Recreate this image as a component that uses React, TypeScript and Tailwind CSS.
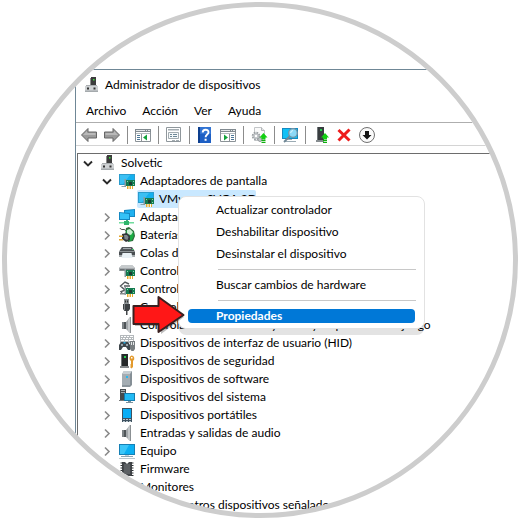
import type { ReactNode } from "react";
import clsx from "clsx";

const MENUS = ["Archivo", "Acción", "Ver", "Ayuda"];

function Svg({ children, className }: { children: ReactNode; className?: string }) {
  return (
    <svg viewBox="0 0 16 16" className={clsx("w-4 h-4 shrink-0", className)} aria-hidden="true">
      {children}
    </svg>
  );
}

/* ---------- shared icon parts ---------- */

function Card() {
  return (
    <>
      <path d="M5.500 6h1.500v8H5.500z" fill="#8d9a9f" />
      <path d="M7 7h9v6H7z" fill="#147a4f" />
      <path d="M8 8h1v1H8zM14 8h1v1h-1zM14 11h1v1h-1z" fill="#8fd8b0" />
      <path d="M10 9h3v3h-3z" fill="#1c3d31" />
      <path d="M8 13h6v3H8z" fill="#e9ab2e" />
      <path d="M9.500 13h1v3h-1zM12 13h1v3h-1z" fill="#fff" />
    </>
  );
}

function UpArrow() {
  return (
    <>
      <path d="M12.500 6L16.500 10.500H14.500V12h-4v-1.500H8.500z" fill="#12cf12" />
      <path d="M10.500 12.500h4V14h-4zM10.500 14.700h4V16h-4z" fill="#0fae0f" />
    </>
  );
}

/* ---------- tree icons ---------- */

const ComputerIcon = () => (
  <Svg>
    <path d="M7 0h5v9H7z" fill="#3c3c3c" />
    <path d="M6 1h1v8H6z" fill="#8b8b8b" />
    <path d="M9 2h1.500v1.500H9z" fill="#3de03d" />
    <path d="M2 8h11v1H2z" fill="#a9adb0" />
    <path d="M1 9h13v6H1z" fill="#cfd2d4" />
    <path d="M1 13.500h13V15H1z" fill="#a5aaad" />
    <path d="M3 10.500h2v2H3zM9.500 10.500h2v2h-2z" fill="#333" />
  </Svg>
);

const DisplayIcon = () => (
  <Svg>
    <path d="M0 1h16v11H0z" fill="#2b9ccd" />
    <path d="M1 2h14v9H1z" fill="#14b0ee" />
    <path d="M1 2h10L4 11H1z" fill="#3cc0f3" />
    <path d="M3 13h4v1H2z" fill="#8fa3ad" />
    <Card />
  </Svg>
);

const NetworkIcon = () => (
  <Svg>
    <path d="M5 1l11-1v8H5z" fill="#1488c2" />
    <path d="M6 2l9-1v6H6z" fill="#1fb1f0" />
    <path d="M0 3l11 1v7H0z" fill="#1488c2" />
    <path d="M1 4l9 1v5H1z" fill="#35c2f7" />
    <path d="M7 11h2v2H7z" fill="#47b07a" />
    <path d="M0 13h15v1.500H0z" fill="#6fdc9c" />
    <path d="M5 12h5v4H5z" fill="#2fb56c" />
  </Svg>
);

const BatteryIcon = () => (
  <Svg>
    <path d="M1 1c1 3 5 0 6 3" fill="none" stroke="#444" />
    <path d="M7 1l3-1 5 4 1 5-2 5-5 1-3-6z" fill="#2f6b3c" />
    <path d="M7.500 3l3-1 4 3v5l-2 3.500-3 .5-2-5z" fill="#19ad43" />
    <path d="M8 3l3-1 3 3-2 3-4-1z" fill="#cdeed3" />
    <path d="M3 7l5-1 3 3v4l-4 2-4-3z" fill="#33373a" />
    <path d="M5 8l3 0 1.500 2-1 3-3-1z" fill="#80878b" />
    <path d="M0 8.500h4V10H0zM0 12h4v1.500H0z" fill="#e0a532" />
  </Svg>
);

const PrinterIcon = () => (
  <Svg>
    <path d="M3 2h10l2 3H1z" fill="#54595c" />
    <path d="M4 3h8v1H4z" fill="#a4aaad" />
    <path d="M1 5h14l1 2v5H0V7z" fill="#4a4f52" />
    <path d="M0 6h16v1H0z" fill="#8d9396" />
    <path d="M0 10h16v2H0z" fill="#a4aaad" />
    <path d="M3.500 8h9l1 5h-11z" fill="#e9f1f5" />
    <path d="M13 4h1.500v1H13z" fill="#37d267" />
  </Svg>
);

const StorageIcon = () => (
  <Svg>
    <path d="M3 2h10l3 3v3H0V5z" fill="#a6abae" />
    <path d="M3 2h10l3 3H0z" fill="#c6cacc" />
    <path d="M1 6h14v1.500H1z" fill="#6b7073" />
    <Card />
  </Svg>
);

const IdeIcon = () => (
  <Svg>
    <path d="M10 3L6 1 1.500 5 6 9l3-2M5 5h6M3 12l-1-1.500 3-1" fill="none" stroke="#555b5e" strokeWidth="1.400" />
    <path d="M1 12h6v1.500H1z" fill="#85898c" />
    <Card />
  </Svg>
);

const UsbIcon = () => (
  <Svg>
    <path d="M5 0h5v5H5z" fill="#8e9497" />
    <path d="M6 1.500h1v2H6zM8 1.500h1v2H8z" fill="#333" />
    <path d="M4 5h7v5l-1.500 2h-4L4 10z" fill="#3d4144" />
    <path d="M5 5h1v6H5z" fill="#7b8184" />
    <path d="M7 12h1.500v4H7z" fill="#44484b" />
  </Svg>
);

const SpeakerIcon = () => (
  <Svg>
    <path d="M3 5h2v7H3z" fill="#7e8487" />
    <path d="M5 5h2v7H5z" fill="#4f5558" />
    <path d="M7 5l4-5v16l-4-4z" fill="#a2a7aa" />
    <path d="M9 3l2-3v16l-2-2z" fill="#c4c8ca" />
    <path d="M11 0h1v16h-1z" fill="#8b9093" />
  </Svg>
);

const HidIcon = () => (
  <Svg>
    <path d="M1 0h14v8H1z" fill="#b4b9bc" />
    <path
      d="M2 1h2v1H2zM5 1h2v1H5zM8 1h2v1H8zM11 1h3v1h-3zM2 3h1v1H2zM4 3h2v1H4zM7 3h2v1H7zM10 3h2v1h-2zM13 3h1v1h-1zM2 5h3v1H2zM6 5h3v1H6zM10 5h4v1h-4z"
      fill="#fff"
    />
    <path d="M2 7h7l2 3v5H9l-2-3H4l-2 3H0v-5z" fill="#3f474c" />
    <path d="M2 9h2v2H2zM7 9h2v2H7z" fill="#95a1a8" />
    <path d="M4.500 7h2v1.500h-2z" fill="#25a9dd" />
    <path d="M11 6h5v8l-1.500 2h-2L11 14z" fill="#777d80" />
    <path d="M12 7h1v3h-1zM14 7h1v3h-1z" fill="#e3e6e7" />
  </Svg>
);

const SecurityIcon = () => (
  <Svg>
    <path d="M3 1h6v12H3z" fill="#26292b" />
    <path d="M2 1h1v12H2z" fill="#707679" />
    <path d="M5 3h2v2H5z" fill="#28cf4f" />
    <path d="M1 13h9v2H1z" fill="#85898c" />
    <path d="M12.500 2.500a3 3 0 0 1 1.500 5.500V14l-1.500 1.500-1.500-1.500 1-1-1-1 1-1V8a3 3 0 0 1 .5-5.500z" fill="#e39a2d" />
    <path d="M12 4h1.500v1.500H12z" fill="#fff" />
  </Svg>
);

const SoftwareIcon = () => (
  <Svg>
    <path d="M3 3l2-3h8v14l-2 2H3z" fill="#858f96" />
    <path d="M3 3h8v13H3z" fill="#a4adb3" />
    <path d="M3 3l2-3h8l-2 3z" fill="#c7ced2" />
    <path d="M7 5h2v2H7z" fill="#2ab8ef" />
    <path d="M3 14h8v2H3z" fill="#8b959c" />
  </Svg>
);

const SystemIcon = () => (
  <Svg>
    <path d="M1 0h6v12H1z" fill="#454b4f" />
    <path d="M2 1h4v1H2zM2 3h4v1H2z" fill="#a3abb0" />
    <path d="M0 11h6v1H0z" fill="#777" />
    <path d="M5 4h11v8H5z" fill="#157cae" />
    <path d="M6 5h9v6H6z" fill="#21baf5" />
    <path d="M9 12h3v1H9zM7 13h7v1H7z" fill="#7c929e" />
  </Svg>
);

const PortableIcon = () => (
  <Svg>
    <path d="M3 1h10v14H3z" fill="#3e5260" />
    <path d="M4 2h8v9H4z" fill="#08adf5" />
    <path d="M4 12h2v1H4zM7 12h2v1H7zM10 12h2v1h-2zM4 14h2v1H4zM7 14h2v1H7zM10 14h2v1h-2z" fill="#b8c4cb" />
  </Svg>
);

const MonitorIcon = () => (
  <Svg>
    <path d="M0 1h16v11H0z" fill="#1680b5" />
    <path d="M1 2h14v9H1z" fill="#0baff2" />
    <path d="M1 2h9L5 11H1z" fill="#3cc6f8" />
    <path d="M6 12h4v1H6z" fill="#bdd0da" />
    <path d="M2 13h12v1H2z" fill="#8ca5b3" />
    <path d="M0 15h16v1H0z" fill="#b9c7cf" />
  </Svg>
);

const FirmwareIcon = () => (
  <Svg>
    <path d="M3 1h10v14H3z" fill="#42464a" />
    <path d="M5 3h6v10H5z" fill="#5c6064" />
    <path
      d="M1.500 2h2M1.500 4.500h2M1.500 7h2M1.500 9.500h2M1.500 12h2M1.500 14.500h2M12.500 2h2M12.500 4.500h2M12.500 7h2M12.500 9.500h2M12.500 12h2M12.500 14.500h2"
      stroke="#2e3235"
    />
    <path d="M6 1h4L8 3z" fill="#fff" />
  </Svg>
);

const DEVICES = [
  { label: "Adaptadores de red", Icon: NetworkIcon },
  { label: "Baterías", Icon: BatteryIcon },
  { label: "Colas de impresión", Icon: PrinterIcon },
  { label: "Controladoras de almacenamiento", Icon: StorageIcon },
  { label: "Controladoras IDE ATA/ATAPI", Icon: IdeIcon },
  { label: "Controladoras de bus serie universal", Icon: UsbIcon },
  { label: "Controladoras de sonido y vídeo y dispositivos de juego", Icon: SpeakerIcon },
  { label: "Dispositivos de interfaz de usuario (HID)", Icon: HidIcon },
  { label: "Dispositivos de seguridad", Icon: SecurityIcon },
  { label: "Dispositivos de software", Icon: SoftwareIcon },
  { label: "Dispositivos del sistema", Icon: SystemIcon },
  { label: "Dispositivos portátiles", Icon: PortableIcon },
  { label: "Entradas y salidas de audio", Icon: SpeakerIcon },
  { label: "Equipo", Icon: MonitorIcon },
  { label: "Firmware", Icon: FirmwareIcon },
  { label: "Monitores", Icon: MonitorIcon },
  { label: "Mouse y otros dispositivos señaladores", Icon: UsbIcon },
];

/* ---------- toolbar ---------- */

function ToolButton({ label, children }: { label: string; children: ReactNode }) {
  return (
    <button type="button" aria-label={label} className="shrink-0">
      <Svg className="block overflow-visible">{children}</Svg>
    </button>
  );
}

const Separator = () => <span className="w-px h-[18px] shrink-0 bg-[#8c8c8c]" />;

const Arrow = () => (
  <>
    <path d="M.5 8L7 1.500v3.500h8.500v6H7v3.500z" fill="#9b9b9b" stroke="#666" strokeLinejoin="round" />
    <path d="M2 8l4-4v2h8.500v2z" fill="#b9b9b9" />
  </>
);

const Panel = () => (
  <>
    <path d="M.5 2.500h15v12H.5z" fill="#fff" stroke="#8b9297" />
    <path d="M0 2h16v3H0z" fill="#818a90" />
    <path d="M1 3h9v1H1zM11 3h1v1h-1zM13 3h2v1h-2z" fill="#e4e8ea" />
    <path d="M1 6h14v1H1z" fill="#b5bcc0" />
  </>
);

function Toolbar() {
  return (
    <div className="flex items-center gap-[7px] h-6 pt-0.5 pl-[5px] border-y border-t-[#aeaeae] border-b-[#d4d4d4]">
      <ToolButton label="Atrás">
        <Arrow />
      </ToolButton>
      <ToolButton label="Adelante">
        <g transform="translate(16 0) scale(-1 1)">
          <Arrow />
        </g>
      </ToolButton>
      <Separator />
      <ToolButton label="Mostrar u ocultar árbol">
        <Panel />
        <path d="M6.500 7v8" stroke="#8b9297" />
        <path d="M2 8h3v1H2zM2 10h3v1H2zM2 12h3v1H2z" fill="#4b7797" />
        <path d="M12 7.500v6l-4-3z" fill="#12a33b" />
      </ToolButton>
      <Separator />
      <ToolButton label="Propiedades">
        <path d="M.5.500h14v14H.5z" fill="#fff" stroke="#8f979c" />
        <path d="M2 2h11v1.500H2z" fill="#a3acb1" />
        <path d="M2.500 5.500h10v6h-10z" fill="#f5f8f9" stroke="#a3acb1" />
        <path d="M4 7h2v1H4zM7 7h4v1H7zM4 9h2v1H4zM7 9h4v1H7z" fill="#6d8797" />
        <path d="M6 13h3v1H6zM10 13h3v1h-3z" fill="#a3acb1" />
      </ToolButton>
      <Separator />
      <ToolButton label="Ayuda">
        <path d="M1 0h13v16H1z" fill="#1d5fc4" />
        <path d="M1 0h2v16H1z" fill="#0d3f8f" />
        <path d="M3 0h11v7H3z" fill="#3274d3" />
        <path d="M5.700 5.500c0-3.700 5.800-3.700 5.800-.3 0 2.300-2.900 2.200-2.900 5" fill="none" stroke="#fff" strokeWidth="1.900" />
        <path d="M7.600 11.700h2v2h-2z" fill="#fff" />
      </ToolButton>
      <ToolButton label="Mostrar panel de acciones">
        <Panel />
        <path d="M9.500 7v8" stroke="#8b9297" />
        <path d="M11 8h3v1h-3zM11 10h3v1h-3zM11 12h3v1h-3z" fill="#4b7797" />
        <path d="M4 7.500v6l4-3z" fill="#12a33b" />
      </ToolButton>
      <Separator />
      <ToolButton label="Actualizar controlador">
        <path d="M3.500.500h7l3 3v10h-10z" fill="#fafafa" stroke="#c3c6c8" />
        <path d="M10.500.500v3h3" fill="#e3e5e6" stroke="#b3b6b8" />
        <circle cx="5" cy="9" r="3.300" fill="#d5d8da" stroke="#9a9fa2" strokeWidth="2" strokeDasharray="1.600 1" />
        <circle cx="5" cy="9" r="2.600" fill="#c0c4c7" />
        <circle cx="5" cy="9" r="1.200" fill="#fff" />
        <circle cx="9" cy="12.500" r="2" fill="#c0c4c7" stroke="#9a9fa2" />
        <UpArrow />
      </ToolButton>
      <Separator />
      <ToolButton label="Buscar cambios de hardware">
        <path d="M0 1h16v11H0z" fill="#1689c0" />
        <path d="M1 2h14v9H1z" fill="#10c0f5" />
        <path d="M5 12h5v1H5zM2 14h12v1H2z" fill="#9babb4" />
        <path d="M8 9l-6 6" stroke="#6f8795" strokeWidth="1.800" />
        <circle cx="11" cy="6" r="4.300" fill="#8bd9f7" stroke="#7592a3" strokeWidth="1.200" />
        <path d="M8.700 6A2.400 2.400 0 0 1 11 3.600" fill="none" stroke="#e4f7ff" />
      </ToolButton>
      <Separator />
      <ToolButton label="Habilitar dispositivo">
        <path d="M4 0h7v13H4z" fill="#393d40" />
        <path d="M4 0h1v13H4z" fill="#73797c" />
        <path d="M7 2h2v2H7z" fill="#24cf4a" />
        <path d="M3 13h8v2H3z" fill="#878d90" />
        <g transform="translate(-.5 0)">
          <UpArrow />
        </g>
      </ToolButton>
      <ToolButton label="Desinstalar dispositivo">
        <path d="M2.500 3l11 10.500M13.500 2.500L2.500 13.500" stroke="#ee1c1c" strokeWidth="3" />
      </ToolButton>
      <ToolButton label="Deshabilitar dispositivo">
        <circle cx="8" cy="8" r="7.500" fill="#fafafa" stroke="#707070" />
        <path d="M6 4h4v4h2.500L8 12.500 3.500 8H6z" fill="#151515" />
      </ToolButton>
    </div>
  );
}

/* ---------- tree ---------- */

function Chevron({ open }: { open?: boolean }) {
  return (
    <Svg>
      {open ? (
        <path d="M4 6.500l4 4 4-4" fill="none" stroke="#2b2b2b" strokeWidth="1.900" />
      ) : (
        <path d="M6 4.500l4 4-4 4" fill="none" stroke="#8a8a8a" strokeWidth="1.600" />
      )}
    </Svg>
  );
}

function Row({ label, icon, open }: { label: string; icon: ReactNode; open?: boolean }) {
  return (
    <div className="flex items-center h-[18px] whitespace-nowrap">
      <button type="button" aria-label={label} aria-expanded={!!open} className="flex justify-center w-5 mr-0.5">
        <Chevron open={open} />
      </button>
      {icon}
      <span className="ml-[5px]">{label}</span>
    </div>
  );
}

function MenuItem({ label }: { label: string }) {
  return (
    <button type="button" role="menuitem" className="block w-full h-[22px] pl-[37px] text-left">
      {label}
    </button>
  );
}

function ContextMenu() {
  return (
    <div
      role="menu"
      className="absolute z-10 left-[81px] top-1.5 w-[247px] pt-0.5 pb-[5px] bg-white border border-[#e2e2e2] rounded-lg shadow-[0_7px_0_-1px_rgba(0,0,0,0.11)]"
    >
      <MenuItem label="Actualizar controlador" />
      <MenuItem label="Deshabilitar dispositivo" />
      <MenuItem label="Desinstalar el dispositivo" />
      <hr className="my-1 ml-[39px] mr-2 border-[#c8c8c8]" />
      <MenuItem label="Buscar cambios de hardware" />
      <hr className="mt-1 mb-2 ml-[39px] mr-2 border-[#c8c8c8]" />
      <div className="relative mx-[9px]">
        <button
          type="button"
          role="menuitem"
          className="flex items-center w-full h-3.5 pl-7 bg-[#0078d7] rounded text-white font-bold"
        >
          Propiedades
        </button>
        <svg viewBox="0 0 54 40" className="absolute -left-14 -top-3.5 w-[54px] h-10" aria-hidden="true">
          <path d="M3 13h26V5l23 17-23 17v-8H3z" fill="#000" opacity=".25" />
          <path d="M1.500 11h25V2l25 18-25 17v-8h-25z" fill="#ff1717" stroke="#3a2020" strokeWidth="2" strokeLinejoin="round" />
        </svg>
      </div>
    </div>
  );
}

function DeviceTree() {
  return (
    <div className="ml-px mt-[7px] border-t border-l border-[#6d6d6d]">
      <Row label="Solvetic" icon={<ComputerIcon />} open />
      <div className="pl-[19px]">
        <Row label="Adaptadores de pantalla" icon={<DisplayIcon />} open />
        <div className="relative">
          <div className="flex items-center w-[119px] h-[18px] ml-10 pl-px bg-[#c9e8ff] rounded-xs whitespace-nowrap">
            <DisplayIcon />
            <span className="ml-[5px]">VMware SVGA 3D</span>
          </div>
          <ContextMenu />
        </div>
        {DEVICES.map(({ label, Icon }) => (
          <Row key={label} label={label} icon={<Icon />} />
        ))}
      </div>
    </div>
  );
}

export default function App() {
  return (
    <main className="min-h-screen bg-white p-0.5">
      <div className="aspect-square w-full overflow-hidden rounded-full border-5 border-[#cdcdcd] bg-white pl-[68px] pt-[62px]">
        <section className="border-t border-l border-[#6f8796] font-['Lato','Open_Sans',sans-serif] text-[12px] leading-[18px] text-black">
          <header className="flex items-center gap-1 h-[30px] pl-2">
            <ComputerIcon />
            <h1 className="pl-px">Administrador de dispositivos</h1>
          </header>
          <nav className="flex items-center h-[22px] gap-4 pl-2.5">
            {MENUS.map((menu) => (
              <button key={menu} type="button">
                {menu}
              </button>
            ))}
          </nav>
          <Toolbar />
          <DeviceTree />
        </section>
      </div>
    </main>
  );
}
